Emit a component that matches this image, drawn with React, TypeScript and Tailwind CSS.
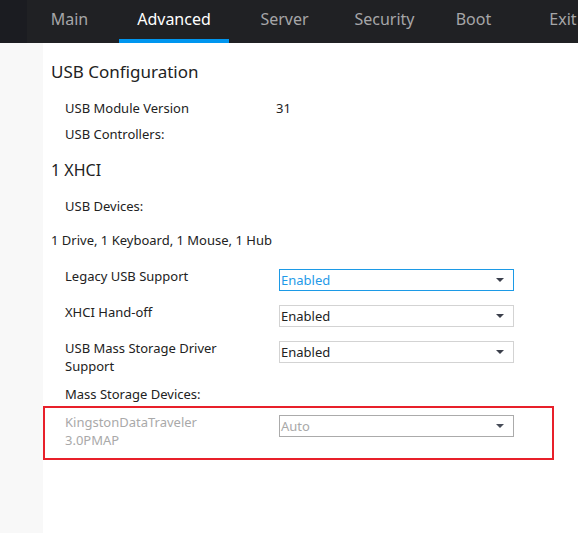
import React from 'react'

const tabs = [
  { label: 'Main', w: 'w-[85px]', active: false },
  { label: 'Advanced', w: 'w-[110px] ml-[7px]', active: true },
  { label: 'Server', w: 'w-[111px]', active: false },
  { label: 'Security', w: 'w-[89px]', active: false },
  { label: 'Boot', w: 'w-[89px]', active: false },
  { label: 'Exit', w: 'w-[90px]', active: false },
]

const Arrow = ({ muted }: { muted?: boolean }) => (
  <svg width="8" height="4" viewBox="0 0 8 4" className="shrink-0">
    <path d="M0 0 H8 L4 4 Z" fill={muted ? '#474c58' : '#3b3f4b'} />
  </svg>
)

const Select = ({
  value,
  variant = 'default',
}: {
  value: string
  variant?: 'default' | 'focused' | 'disabled'
}) => {
  const border =
    variant === 'focused'
      ? 'border-[#1c9ae6]'
      : variant === 'disabled'
      ? 'border-[#ababab]'
      : 'border-[#d3d3d3]'
  const text =
    variant === 'focused'
      ? 'text-[#1f9ae8]'
      : variant === 'disabled'
      ? 'text-[#a9a9a9]'
      : 'text-[#222]'
  return (
    <div
      className={`flex h-[22px] w-[235px] items-center justify-between border pl-[1px] pr-[9px] ${border}`}
    >
      <span className={`text-[13px] leading-[18px] ${text}`}>{value}</span>
      <Arrow muted={variant === 'disabled'} />
    </div>
  )
}

const Row = ({ label, children }: { label: React.ReactNode; children: React.ReactNode }) => (
  <div className="flex h-[36px] items-start pl-[14px]">
    <div className="w-[214px] text-[13px] leading-[18px] text-[#222]">{label}</div>
    <div className="pt-[2px]">{children}</div>
  </div>
)

export default function App() {
  return (
    <div
      className="flex h-[533px] w-[578px] flex-col overflow-hidden bg-white"
      style={{ fontFamily: '"Noto Sans", "Open Sans", sans-serif' }}
    >
      <div className="flex h-[43px] shrink-0 bg-[#202124]">
        <div className="w-[27px] shrink-0 bg-[#1b1c21]" />
        {tabs.map((t) => (
          <div key={t.label} className={`relative flex shrink-0 items-center justify-center pb-[5px] ${t.w}`}>
            <span className={`text-[16px] leading-[22px] ${t.active ? 'text-white' : 'text-[#a6a6a8]'}`}>
              {t.label}
            </span>
            {t.active && <div className="absolute bottom-0 left-0 h-[4px] w-full bg-[#0096ef]" />}
          </div>
        ))}
      </div>

      <div className="flex flex-1">
        <div className="w-[43px] shrink-0 bg-[#f8f8f8]" />
        <div className="flex flex-1 flex-col pl-[8px] pt-[17px] text-[#222]">
          <div className="text-[17px] leading-[24px]">USB Configuration</div>

          <div className="mt-[15px] flex pl-[14px] text-[13px] leading-[18px]">
            <span className="w-[211px]">USB Module Version</span>
            <span>31</span>
          </div>
          <div className="mt-[8px] pl-[14px] text-[13px] leading-[18px]">USB Controllers:</div>

          <div className="mt-[16px] text-[16px] leading-[22px]">1 XHCI</div>

          <div className="mt-[16px] pl-[14px] text-[13px] leading-[18px]">USB Devices:</div>
          <div className="mt-[16px] text-[13px] leading-[18px]">1 Drive, 1 Keyboard, 1 Mouse, 1 Hub</div>

          <div className="mt-[18px]">
            <Row label="Legacy USB Support">
              <Select value="Enabled" variant="focused" />
            </Row>
            <Row label="XHCI Hand-off">
              <Select value="Enabled" />
            </Row>
            <Row
              label={
                <>
                  USB Mass Storage Driver
                  <br />
                  Support
                </>
              }
            >
              <Select value="Enabled" />
            </Row>
          </div>

          <div className="mt-[10px] pl-[14px] text-[13px] leading-[18px]">Mass Storage Devices:</div>

          <div className="ml-[-8px] mt-[3px] flex h-[54px] w-[511px] items-start border-2 border-[#e8202a] pl-[20px] pt-[5px]">
            <div className="w-[214px] text-[13px] leading-[18px] text-[#a9a9a9]">
              KingstonDataTraveler
              <br />
              3.0PMAP
            </div>
            <div className="pt-[2px]">
              <Select value="Auto" variant="disabled" />
            </div>
          </div>
        </div>
      </div>
    </div>
  )
}
